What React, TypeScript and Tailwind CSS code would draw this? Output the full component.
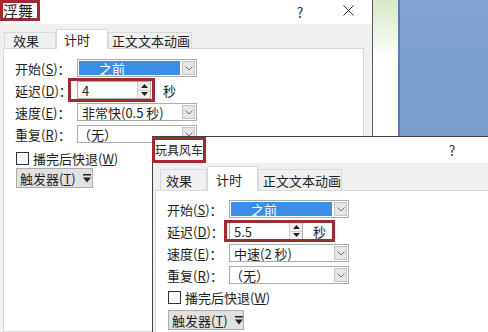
import React from "react";

function Chevron() {
  return (
    <svg width="8" height="5" viewBox="0 0 8 5">
      <path d="M0.5 0.5 L4 4 L7.5 0.5" fill="none" stroke="#707070" strokeWidth="1" />
    </svg>
  );
}

function CloseIcon() {
  return (
    <svg width="11" height="11" viewBox="0 0 11 11">
      <path d="M0.5 0.5 L10.5 10.5 M10.5 0.5 L0.5 10.5" stroke="#333" strokeWidth="1" />
    </svg>
  );
}

function TriggerIcon() {
  return (
    <svg width="8" height="10" viewBox="0 0 8 10" className="ml-[7px]">
      <rect x="0" y="1" width="8" height="1.5" fill="#222" />
      <path d="M0 4.5 L8 4.5 L4 9.5 Z" fill="#222" />
    </svg>
  );
}

function Combo({ value, selected }: { value: React.ReactNode; selected?: boolean }) {
  return (
    <div className="flex h-[18px] w-[120px] shrink-0 items-stretch gap-[2px] border border-[#acacac] bg-white p-px">
      {selected ? (
        <div className="flex flex-1 items-center bg-[#3b8ee8] pl-[20px] text-white">{value}</div>
      ) : (
        <div className="flex flex-1 items-center whitespace-nowrap pl-[3px]">{value}</div>
      )}
      <div className="flex w-[13px] items-center justify-center border border-[#c4c4c4] bg-[#e6e6e6]">
        <Chevron />
      </div>
    </div>
  );
}

function SpinInput({ value }: { value: string }) {
  return (
    <div className="flex h-[18px] w-[74px] shrink-0 border border-[#acacac] bg-white">
      <span className="flex flex-1 items-center pl-[4px]">{value}</span>
      <div className="flex w-[13px] flex-col border-l border-[#d0d0d0] bg-[#f0f0f0]">
        <div className="flex flex-1 items-center justify-center border-b border-[#d0d0d0]">
          <svg width="7" height="4" viewBox="0 0 7 4">
            <path d="M0 4 L3.5 0 L7 4 Z" fill="#222" />
          </svg>
        </div>
        <div className="flex flex-1 items-center justify-center">
          <svg width="7" height="4" viewBox="0 0 7 4">
            <path d="M0 0 L7 0 L3.5 4 Z" fill="#222" />
          </svg>
        </div>
      </div>
    </div>
  );
}

function Row({ label, k, children }: { label: string; k: string; children: React.ReactNode }) {
  return (
    <div className="flex h-[22px] items-center">
      <span className="w-[62px] shrink-0 whitespace-nowrap">
        {label}(<span className="underline">{k}</span>)：
      </span>
      {children}
    </div>
  );
}

function Tabs({ big }: { big?: boolean }) {
  return (
    <div className={big ? "flex h-[27px] shrink-0 items-end whitespace-nowrap pl-[5px]" : "flex h-[24px] shrink-0 items-end whitespace-nowrap pl-px"}>
      <div
        className={
          big
            ? "flex h-[21px] w-[47px] shrink-0 items-center border border-b-0 border-[#d9d9d9] bg-[#f0f0f0] pl-[5px]"
            : "flex h-[16px] w-[52px] shrink-0 items-center border border-b-0 border-[#d9d9d9] bg-[#f0f0f0] pl-[8px]"
        }
      >
        效果
      </div>
      <div
        className={
          big
            ? "z-10 -mb-px flex h-[25px] w-[51px] shrink-0 items-center border border-b-0 border-[#d9d9d9] bg-white pl-[8px]"
            : "z-10 -mb-px flex h-[20px] w-[52px] shrink-0 items-center border border-b-0 border-[#d9d9d9] bg-white pl-[7px]"
        }
      >
        计时
      </div>
      <div
        className={
          big
            ? "flex h-[21px] w-[84px] shrink-0 items-center border border-b-0 border-[#d9d9d9] bg-[#f0f0f0] pl-[4px]"
            : "flex h-[16px] w-[84px] shrink-0 items-center border border-b-0 border-[#d9d9d9] bg-[#f0f0f0] pl-[3px]"
        }
      >
        正文文本动画
      </div>
    </div>
  );
}

function Panel({ big }: { big?: boolean }) {
  return (
    <div className={big ? "flex flex-1 flex-col border border-[#d9d9d9] bg-white px-[11px] pt-[7px]" : "flex flex-1 flex-col border border-[#d9d9d9] bg-white px-[11px] pt-[8px]"}>
      <Row label="开始" k="S">
        <Combo selected value="之前" />
      </Row>
      <Row label="延迟" k="D">
        {big ? (
          <div className="relative flex items-center">
            <SpinInput value="5.5" />
            <span className="ml-[10px]">秒</span>
            <div className="absolute -bottom-[2px] -left-[5px] -right-[9px] -top-[2px] border-[3px] border-[#9e2b2f]" />
          </div>
        ) : (
          <div className="flex items-center">
            <div className="relative">
              <SpinInput value="4" />
              <div className="absolute -bottom-[3px] -left-[9px] -right-[4px] -top-[3px] border-[3px] border-[#9e2b2f]" />
            </div>
            <span className="ml-[12px]">秒</span>
          </div>
        )}
      </Row>
      <Row label="速度" k="E">
        <Combo value={big ? "中速(2 秒)" : "非常快(0.5 秒)"} />
      </Row>
      <Row label="重复" k="R">
        <Combo value={<span className="-ml-[4px]">（无）</span>} />
      </Row>
      <div className={big ? "mt-px flex h-[20px] items-center pl-px" : "mt-[3px] flex h-[20px] items-center pl-px"}>
        <span className="h-[13px] w-[13px] border border-[#333] bg-white" />
        <span className="ml-[4px]">
          播完后快退(<span className="underline">W</span>)
        </span>
      </div>
      <div className={big ? "ml-px mt-[3px] flex h-[20px] w-[76px] items-center border border-[#adadad] bg-[#e1e1e1] pl-[3px]" : "ml-px flex h-[20px] w-[77px] items-center border border-[#adadad] bg-[#e1e1e1] pl-[3px]"}>
        <span>
          触发器(<span className="underline">T</span>)
        </span>
        <TriggerIcon />
      </div>
    </div>
  );
}

export default function App() {
  return (
    <div className="relative flex h-[332px] w-[488px] overflow-hidden bg-white font-['Noto_Sans_CJK_SC',sans-serif] text-[13px] leading-none text-[#1e1e1e]">
      {/* back dialog */}
      <div className="flex h-full w-[373px] shrink-0 flex-col border-r border-[#585858] bg-[#f0f0f0]">
        <div className="flex h-[24px] shrink-0 items-start bg-white">
          <span className="flex h-[21px] items-center border-[3px] border-[#9e2b2f] pr-[4px] text-[15px]">浮舞</span>
          <span className="ml-auto mt-[5px] w-[14px] text-center text-[14px] text-[#333]">?</span>
          <span className="ml-[34px] mr-[17px] mt-[5px] flex w-[14px] justify-center">
            <CloseIcon />
          </span>
        </div>
        <div className="flex flex-1 flex-col pl-[3px] pr-[8px]">
          <Tabs />
          <Panel />
        </div>
      </div>
      {/* slide edge + blue slide */}
      <div className="h-full w-[25px] shrink-0 bg-linear-to-b from-[#d6e9c6] via-white via-[18%] to-white" />
      <div className="h-full flex-1 border-l-2 border-[#5a7bab] bg-linear-to-b from-[#80a2d4] to-[#7095c8]" />

      {/* front dialog */}
      <div className="absolute left-[152px] top-[136px] flex h-[220px] w-[400px] flex-col border-l border-t border-[#3f3f3f] bg-[#f0f0f0]">
        <div className="flex h-[26px] shrink-0 items-center bg-white">
          <span className="-ml-px flex h-full items-center border-[3px] border-[#9e2b2f] text-[12px]">玩具风车</span>
          <span className="ml-[239px] w-[14px] text-center text-[14px] text-[#333]">?</span>
        </div>
        <div className="flex flex-1 flex-col pl-[2px]">
          <Tabs big />
          <Panel big />
        </div>
      </div>
    </div>
  );
}
